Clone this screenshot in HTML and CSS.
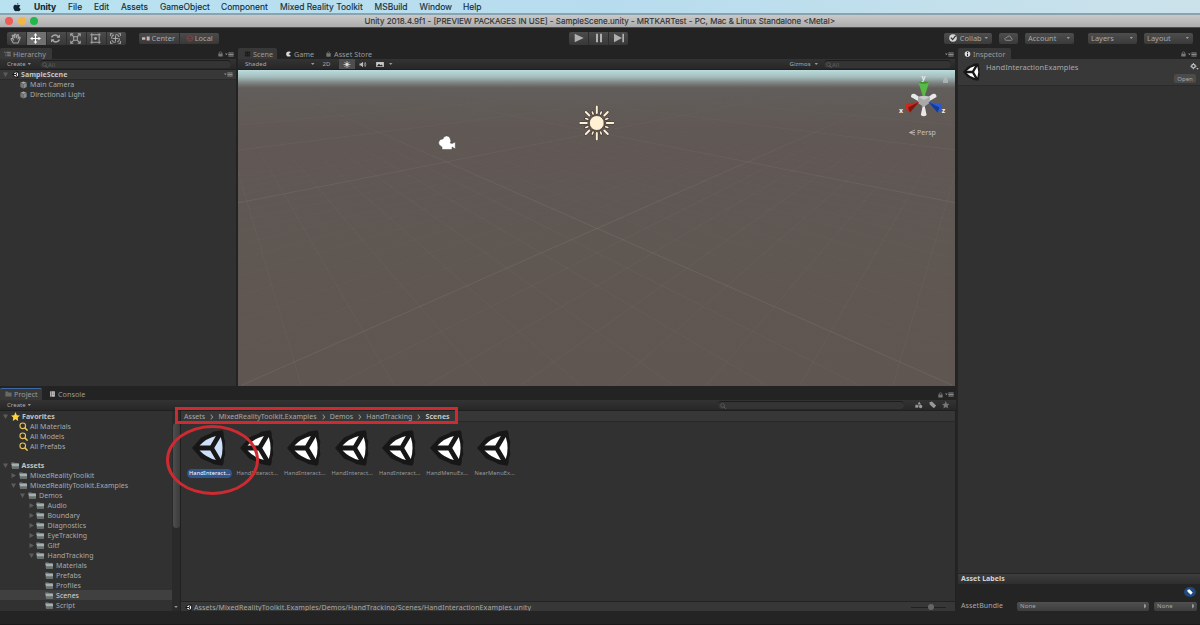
FILE: index.html
```
<!DOCTYPE html>
<html>
<head>
  <meta charset="UTF-8">
  <title>Unity 2018.4.9f1 - SampleScene.unity - MRTKARTest</title>
  <link rel="stylesheet" href="styles.css">
</head>
<body>

<!-- shared icons -->
<svg class="sprite">
  <symbol id="unity" viewBox="0 0 104 108">
    <path fill="#171717" d="M0 54 L28 22 60 8 64 4 92 0 96 5 98 24 102 34 100 54 102 74 98 84 96 103 92 108 64 103 60 100 28 86Z"/>
    <path fill="currentColor" d="M23 46 L56 46 73 17 Q44 24 23 46Z M68 54 L88 20 Q99 54 88 88Z M23 62 L56 62 73 91 Q44 84 23 62Z"/>
  </symbol>
  <symbol id="folder" viewBox="0 0 26 21">
    <path fill="#7b8688" d="M1 2 Q1 1 2 1 H10 L12 3 H23 Q24 3 24 4 V9 H1Z"/>
    <path fill="#a3aeb0" d="M2 6 H25 L24 20 H3Z"/>
    <path fill="#66716f" d="M2.500 13 H24.500 L24 20 H3Z"/>
  </symbol>
  <symbol id="lock" viewBox="0 0 16 18">
    <path fill="none" stroke="#777" stroke-width="2.500" d="M4 9 V5 Q4 2 8 2 Q12 2 12 5 V9"/>
    <rect x="1" y="8" width="14" height="9" fill="#777"/>
  </symbol>
  <symbol id="menu" viewBox="0 0 27 14">
    <path fill="#8b8b8b" d="M0 4 H8 L4 9Z M10 1 H26 V4 H10Z M10 5.500 H26 V8.500 H10Z M10 10 H26 V13 H10Z"/>
  </symbol>
  <symbol id="search" viewBox="0 0 24 24">
    <circle cx="10" cy="10" r="7.500" fill="none" stroke="currentColor" stroke-width="3"/>
    <path stroke="currentColor" stroke-width="4" d="M15 15 L23 23"/>
  </symbol>
  <symbol id="cube" viewBox="0 0 22 24">
    <path fill="#a5a5a5" d="M11 1 L21 5 11 9 1 5Z"/>
    <path fill="#777" d="M1 5.500 L11 9.500 V23 L1 18Z"/>
    <path fill="#8b8b8b" d="M21 5.500 L11 9.500 V23 L21 18Z"/>
  </symbol>
  <symbol id="down" viewBox="0 0 10 10"><path fill="#5c5c5c" d="M0 1 H10 L5 10Z"/></symbol>
  <symbol id="right" viewBox="0 0 10 10"><path fill="#5c5c5c" d="M1 0 V10 L10 5Z"/></symbol>
</svg>

<div class="menubar">
  <svg class="apple" viewBox="0 0 24 28"><path fill="#123" d="M16 1 Q16 5 12 7 Q11 3 16 1Z M12 9 Q14 7 18 7 Q21 8 22 10 Q18 12 19 16 Q20 19 23 20 Q20 28 16 27 Q12 25 9 27 Q5 28 2 20 Q-1 9 6 7.500 Q9 7 12 9Z"/></svg>
  <b class="m-unity">Unity</b>
  <span class="m-file">File</span>
  <span class="m-edit">Edit</span>
  <span class="m-assets">Assets</span>
  <span class="m-object">GameObject</span>
  <span class="m-component">Component</span>
  <span class="m-mrtk">Mixed Reality Toolkit</span>
  <span class="m-build">MSBuild</span>
  <span class="m-window">Window</span>
  <span>Help</span>
</div>

<div class="titlebar">
  <i class="light red"></i><i class="light yellow"></i><i class="light green"></i>
  <span class="title">Unity 2018.4.9f1 - [PREVIEW PACKAGES IN USE] - SampleScene.unity - MRTKARTest - PC, Mac &amp; Linux Standalone &lt;Metal&gt;</span>
</div>

<div class="toolbar">
  <div class="group tools">
    <button><svg viewBox="0 0 30 30"><path d="M9 27 L3 17 Q3 14 6 15 L9 18 L6 7 Q8 4 10 7 L12 14 L12 4 Q14 1 16 4 L17 14 L20 5 Q22 3 23 6 L22 15 L26 11 Q29 11 27 15 L22 27Z"/></svg></button>
    <button class="on"><svg viewBox="0 0 30 30"><path d="M15 3 V27 M3 15 H27" stroke="#fff" stroke-width="3"/><path fill="#fff" stroke="none" d="M15 0 L20 7 H10Z M15 30 L20 23 H10Z M0 15 L7 10 V20Z M30 15 L23 10 V20Z"/></svg></button>
    <button><svg viewBox="0 0 30 30"><path stroke-width="4" d="M4 12 Q9 4 17 6 L23 10 M26 18 Q21 26 13 24 L7 20"/><path class="solid" d="M27 4 V13 H18Z M3 26 V17 H12Z"/></svg></button>
    <button><svg viewBox="0 0 30 30"><path d="M4 4 L11 11 M26 4 L19 11 M4 26 L11 19 M26 26 L19 19 M10 10 H20 V20 H10Z M2 9 V2 H9 M21 2 H28 V9 M28 21 V28 H21 M9 28 H2 V21"/></svg></button>
    <button><svg viewBox="0 0 30 30"><path d="M5 1 V29 M25 1 V29 M1 5 H29 M1 25 H29"/><circle class="solid" cx="15" cy="15" r="4"/></svg></button>
    <button><svg viewBox="0 0 30 30"><path d="M15 7 V23 M7 15 H23 M1 8 V2 H7 M23 2 H29 V8 M29 22 V28 H23 M7 28 H1 V22"/><circle cx="15" cy="15" r="11" stroke-dasharray="12 5"/></svg></button>
  </div>
  <div class="group pivot">
    <button><svg class="ico" viewBox="0 0 24 16"><path fill="#bbb" d="M0 4 H10 V12 H0Z M14 2 H23 V14 H14Z"/><circle cx="12" cy="8" r="3" fill="#a44"/></svg>Center</button>
    <button><svg class="ico" viewBox="0 0 24 22"><path fill="none" stroke="#844" stroke-width="2.500" d="M3 7 L12 2 21 7 V15 L12 20 3 15Z M3 10 Q12 16 21 10"/></svg>Local</button>
  </div>
  <div class="group play">
    <button><svg viewBox="0 0 30 30"><path class="solid" d="M2 2 L29 15 2 28Z"/></svg></button>
    <button><svg viewBox="0 0 30 30"><path class="solid" d="M6 2 H12 V28 H6Z M18 2 H24 V28 H18Z"/></svg></button>
    <button><svg viewBox="0 0 30 30"><path class="solid" d="M0 2 L24 15 0 28Z M25 2 H30 V28 H25Z"/></svg></button>
  </div>
  <div class="right-tools">
    <button class="drop collab"><svg class="check" viewBox="0 0 20 20"><circle cx="10" cy="10" r="9.500" fill="#d6d6d6"/><path fill="none" stroke="#333" stroke-width="3" d="M5 9 L9 14 17 4"/></svg>Collab<i class="caret"></i></button>
    <button class="drop cloud"><svg viewBox="0 0 26 18"><path fill="none" stroke="#aaa" stroke-width="2" d="M6 16 Q1 15 2 11 Q4 7 8 8 Q11 1 17 3 Q20 5 20 9 Q25 10 24 14 Q23 16 20 16Z"/></svg></button>
    <button class="drop account">Account<i class="caret"></i></button>
    <button class="drop layers">Layers<i class="caret"></i></button>
    <button class="drop layout">Layout<i class="caret"></i></button>
  </div>
</div>

<div class="workspace">
  <div class="left">
    <div class="upper">

      <div class="panel hierarchy">
        <div class="tabs">
          <div class="tab active"><svg viewBox="0 0 24 18"><path stroke="#aaa" stroke-width="2.500" d="M1 3 H5 M8 3 H23 M5 9 H8 M11 9 H23 M5 15 H8 M11 15 H23"/></svg>Hierarchy</div>
          <div class="corner"><svg class="lk"><use href="#lock"/></svg><svg class="mn"><use href="#menu"/></svg></div>
        </div>
        <div class="strip">
          <span class="create">Create</span><i class="caret"></i>
          <div class="search"><svg><use href="#search"/></svg>All</div>
        </div>
        <div class="row scene-row">
          <svg class="arrow"><use href="#down"/></svg>
          <svg class="u"><use href="#unity"/></svg><b>SampleScene</b>
          <svg class="mn"><use href="#menu"/></svg>
        </div>
        <div class="row obj"><svg><use href="#cube"/></svg>Main Camera</div>
        <div class="row obj"><svg><use href="#cube"/></svg>Directional Light</div>
      </div>

      <div class="panel scene">
        <div class="tabs">
          <div class="tab active"><svg viewBox="0 0 18 18"><path stroke="#161616" stroke-width="2" d="M4 1 V17 M9 1 V17 M14 1 V17 M1 4 H17 M1 9 H17 M1 14 H17"/></svg>Scene</div>
          <div class="tab game"><svg viewBox="0 0 18 18"><path fill="#ddd" d="M15 2 Q2 -1 2 9 Q2 19 15 16 V13 L9 9 15 5Z"/></svg>Game</div>
          <div class="tab store"><svg viewBox="0 0 18 18"><path fill="#777" d="M2 7 H16 L15 17 H3Z"/><path fill="none" stroke="#777" stroke-width="2" d="M6 7 V4 Q9 0 12 4 V7"/></svg>Asset Store</div>
          <div class="corner"><svg class="mn"><use href="#menu"/></svg></div>
        </div>
        <div class="strip">
          <span class="shaded">Shaded</span><i class="caret"></i>
          <span class="twod">2D</span>
          <span class="sb sun-on"><svg viewBox="0 0 20 20"><circle cx="10" cy="10" r="4" fill="#ddd"/><path stroke="#ddd" stroke-width="2" d="M10 0 V20 M0 10 H20 M3 3 L17 17 M17 3 L3 17"/></svg></span>
          <span class="sb"><svg viewBox="0 0 20 20"><path fill="#bbb" d="M0 7 H4 L10 2 V18 L4 13 H0Z"/><path fill="none" stroke="#bbb" stroke-width="2" d="M13 6 Q15 10 13 14 M16 3 Q20 10 16 17"/></svg></span>
          <span class="sb"><svg viewBox="0 0 22 20"><path fill="#ccc" d="M0 3 H22 V17 H0Z"/><path fill="#222" d="M2 15 L8 8 12 12 15 10 20 15Z"/></svg></span>
          <i class="caret fx"></i>
          <span class="gizmos">Gizmos</span><i class="caret"></i>
          <div class="search"><svg><use href="#search"/></svg>All</div>
        </div>
        <div class="viewport">
          <svg class="view" viewBox="238 70 717 316">
            <defs>
              <linearGradient id="fade" x1="0" y1="84" x2="0" y2="386" gradientUnits="userSpaceOnUse">
                <stop offset="0" stop-color="#000"/>
                <stop offset=".2" stop-color="#888"/>
                <stop offset=".4" stop-color="#fff"/>
              </linearGradient>
              <mask id="far" maskUnits="userSpaceOnUse" x="238" y="70" width="718" height="316">
                <rect x="238" y="70" width="718" height="316" fill="url(#fade)"/>
              </mask>
              <!-- floor lines running to the right vanishing point -->
              <g id="floor">
                <path opacity=".22" d="M990 55 L242 385 M990 55 L-688 385 M990 55 L-1618 385 M990 55 L-2548 385 M990 55 L-3478 385"/>
                <path opacity=".06" d="M990 55 L149 385 M990 55 L56 385 M990 55 L-37 385 M990 55 L-130 385 M990 55 L-223 385 M990 55 L-316 385 M990 55 L-409 385 M990 55 L-502 385 M990 55 L-595 385 M990 55 L-781 385 M990 55 L-874 385 M990 55 L-967 385 M990 55 L-1060 385"/>
                <path opacity=".1" d="M990 55 L335 385 M990 55 L428 385 M990 55 L521 385 M990 55 L614 385 M990 55 L707 385 M990 55 L800 385 M990 55 L893 385"/>
              </g>
            </defs>
            <g mask="url(#far)" stroke="#a09c98" stroke-width=".8">
              <use href="#floor"/>
              <use href="#floor" transform="translate(1194 0) scale(-1 1)"/>
            </g>
            <!-- camera -->
            <path fill="#fff" stroke="#4a4442" stroke-width=".5" d="M440.500 146 A3.800 3.800 0 0 1 443 139 A3.700 3.700 0 0 1 450.300 139 A3.700 3.700 0 0 1 450.300 143 L452 143.500 L455.300 142 V149 L452 147 V149.500 H442 V147Z"/>
            <!-- directional light -->
            <g transform="translate(596.800 123)" stroke-linecap="round">
              <g stroke="#3f3733" stroke-width="3">
                <path d="M0 -16.500 V-10 M0 16.500 V10 M-16.500 0 H-10 M16.500 0 H10 M-11 -11 L-7.500 -7.500 M11 -11 L7.500 -7.500 M-11 11 L-7.500 7.500 M11 11 L7.500 7.500"/>
                <path d="M-4.500 -11 L-3.700 -9 M4.500 -11 L3.700 -9 M-4.500 11 L-3.700 9 M4.500 11 L3.700 9 M-11 -4.500 L-9 -3.700 M11 -4.500 L9 -3.700 M-11 4.500 L-9 3.700 M11 4.500 L9 3.700"/>
              </g>
              <g stroke="#fff0d4" stroke-width="2">
                <path d="M0 -16.500 V-10 M0 16.500 V10 M-16.500 0 H-10 M16.500 0 H10 M-11 -11 L-7.500 -7.500 M11 -11 L7.500 -7.500 M-11 11 L-7.500 7.500 M11 11 L7.500 7.500"/>
                <path stroke-width="1.600" d="M-4.500 -11 L-3.700 -9 M4.500 -11 L3.700 -9 M-4.500 11 L-3.700 9 M4.500 11 L3.700 9 M-11 -4.500 L-9 -3.700 M11 -4.500 L9 -3.700 M-11 4.500 L-9 3.700 M11 4.500 L9 3.700"/>
              </g>
              <circle r="7.500" fill="#fff0d4" stroke="#3f3733" stroke-width=".8"/>
            </g>
            <!-- orientation gizmo -->
            <path fill="#e8e8e8" d="M911 97 Q911 93 915 94 L920.500 98 918 101Z M936.500 97 Q936.500 93 932.500 94 L927 98 929.500 101Z M920.800 115 Q923.700 117.500 926.600 115 L924.700 106 H922.700Z"/>
            <path fill="#a9a9a9" d="M918 97 L924 95.500 930 97 929.500 103 923.700 107 918 103Z"/>
            <path fill="#c9c9c9" d="M918 97 L924 95.500 930 97 924 100Z"/>
            <path fill="#58b947" d="M918.500 82.500 Q923.700 80.500 929 82.500 L924.700 96 H922.800Z"/>
            <path fill="#3d9230" d="M918.500 82.500 Q923.700 85 929 82.500 Q923.700 80.500 918.500 82.500Z"/>
            <path fill="#c92a1c" d="M905.500 104 L919 102 910 112.500 Q905 111 905.500 104Z"/>
            <path fill="#7e1610" d="M908 107.500 L919 102 910 112.500Z"/>
            <path fill="#2a5bd0" d="M942 104 L928.500 102 937.500 112.500 Q942.500 111 942 104Z"/>
            <path fill="#163a94" d="M939.500 107.500 L928.500 102 937.500 112.500Z"/>
            <text x="921.500" y="80">y</text><text x="899" y="113">x</text><text x="941.700" y="113">z</text>
            <path fill="none" stroke="#c5c0be" stroke-width=".8" d="M915 130 L909.500 132.500 915 135 M915 132.500 H909.500"/>
            <text class="persp" x="917" y="135">Persp</text>
            <path fill="#b8c0c0" opacity=".7" d="M943 79.500 H948 V83 H943Z M944 79.500 V77.500 H947 V79.500Z"/>
          </svg>
        </div>
      </div>
    </div>

    <div class="panel project">
      <div class="tabs">
        <div class="tab active focus"><svg viewBox="0 0 20 16"><path fill="#686868" d="M1 1 H8 L10 4 H19 V15 H1Z"/></svg>Project</div>
        <div class="tab console"><svg viewBox="0 0 16 18"><path fill="#ccc" d="M1 1 H15 V17 H1Z"/><path stroke="#555" stroke-width="2" d="M5 1 V17 M8 6 H13 M8 11 H13"/></svg>Console</div>
        <div class="corner"><svg class="lk"><use href="#lock"/></svg><svg class="mn"><use href="#menu"/></svg></div>
      </div>
      <div class="strip">
        <span class="create">Create</span><i class="caret"></i>
        <div class="search"><svg><use href="#search"/></svg></div>
        <div class="filters">
          <svg viewBox="0 0 20 20"><path fill="#999" d="M7 9 L11 1 16 9Z M0 17 L2 9 10 12 8 18Z"/><circle cx="15" cy="14.500" r="4.500" fill="#999"/></svg>
          <svg viewBox="0 0 20 20"><path fill="#999" d="M1 3 L8 1 19 12 13 19 2 9Z"/></svg>
          <svg viewBox="0 0 20 20"><path fill="#777" d="M10 0 L13 7 20 8 15 12 16 20 10 16 4 20 5 12 0 8 7 7Z"/></svg>
        </div>
      </div>
      <div class="browser">
        <div class="tree">
          <div class="row"><svg class="arrow"><use href="#down"/></svg><svg class="star" viewBox="0 0 20 20"><path fill="#ffd23e" d="M10 0 L13 7 20 8 15 12 16 20 10 16 4 20 5 12 0 8 7 7Z"/></svg><b>Favorites</b></div>
          <div class="row fav"><svg><use href="#search"/></svg>All Materials</div>
          <div class="row fav"><svg><use href="#search"/></svg>All Models</div>
          <div class="row fav"><svg><use href="#search"/></svg>All Prefabs</div>
          <div class="row root"><svg class="arrow"><use href="#down"/></svg><svg class="dir"><use href="#folder"/></svg><b>Assets</b></div>
          <div class="row d1"><svg class="arrow"><use href="#right"/></svg><svg class="dir"><use href="#folder"/></svg>MixedRealityToolkit</div>
          <div class="row d1"><svg class="arrow"><use href="#down"/></svg><svg class="dir"><use href="#folder"/></svg>MixedRealityToolkit.Examples</div>
          <div class="row d2"><svg class="arrow"><use href="#down"/></svg><svg class="dir"><use href="#folder"/></svg>Demos</div>
          <div class="row d3"><svg class="arrow"><use href="#right"/></svg><svg class="dir"><use href="#folder"/></svg>Audio</div>
          <div class="row d3"><svg class="arrow"><use href="#right"/></svg><svg class="dir"><use href="#folder"/></svg>Boundary</div>
          <div class="row d3"><svg class="arrow"><use href="#right"/></svg><svg class="dir"><use href="#folder"/></svg>Diagnostics</div>
          <div class="row d3"><svg class="arrow"><use href="#right"/></svg><svg class="dir"><use href="#folder"/></svg>EyeTracking</div>
          <div class="row d3"><svg class="arrow"><use href="#right"/></svg><svg class="dir"><use href="#folder"/></svg>Gltf</div>
          <div class="row d3"><svg class="arrow"><use href="#down"/></svg><svg class="dir"><use href="#folder"/></svg>HandTracking</div>
          <div class="row d4"><svg class="dir"><use href="#folder"/></svg>Materials</div>
          <div class="row d4"><svg class="dir"><use href="#folder"/></svg>Prefabs</div>
          <div class="row d4"><svg class="dir"><use href="#folder"/></svg>Profiles</div>
          <div class="row d4 selected"><svg class="dir"><use href="#folder"/></svg>Scenes</div>
          <div class="row d4"><svg class="dir"><use href="#folder"/></svg>Script</div>
        </div>
        <div class="scrollbar"><div class="thumb"></div><i class="caret"></i></div>
        <div class="content">
          <div class="crumbs">
            <span>Assets</span><i></i><span>MixedRealityToolkit.Examples</span><i></i><span>Demos</span><i></i><span>HandTracking</span><i></i><b>Scenes</b>
          </div>
          <div class="files">
            <div class="file picked"><svg><use href="#unity"/></svg><span>HandInteract...</span></div>
            <div class="file"><svg><use href="#unity"/></svg><span>HandInteract...</span></div>
            <div class="file"><svg><use href="#unity"/></svg><span>HandInteract...</span></div>
            <div class="file"><svg><use href="#unity"/></svg><span>HandInteract...</span></div>
            <div class="file"><svg><use href="#unity"/></svg><span>HandInteract...</span></div>
            <div class="file"><svg><use href="#unity"/></svg><span>HandMenuEx...</span></div>
            <div class="file"><svg><use href="#unity"/></svg><span>NearMenuEx...</span></div>
          </div>
          <div class="pathbar">
            <svg><use href="#unity"/></svg><span>Assets/MixedRealityToolkit.Examples/Demos/HandTracking/Scenes/HandInteractionExamples.unity</span>
            <div class="slider"><i></i></div>
          </div>
        </div>
      </div>
    </div>
  </div>

  <div class="panel inspector">
    <div class="tabs">
      <div class="tab active"><svg viewBox="0 0 18 18"><circle cx="9" cy="9" r="8.500" fill="#ddd"/><path stroke="#222" stroke-width="3" d="M9 3 V6 M9 8 V15"/></svg>Inspector</div>
      <div class="corner"><svg class="lk"><use href="#lock"/></svg><svg class="mn"><use href="#menu"/></svg></div>
    </div>
    <div class="asset-head">
      <svg class="big"><use href="#unity"/></svg>
      <span class="name">HandInteractionExamples</span>
      <div class="side">
        <svg viewBox="0 0 24 20"><circle cx="9" cy="9" r="5" fill="none" stroke="#bbb" stroke-width="4"/><path stroke="#bbb" stroke-width="3" stroke-dasharray="4 10" d="M9 0 V18 M0 9 H18"/><path fill="#bbb" d="M17 14 H24 L20.500 19Z"/></svg>
        <button>Open</button>
      </div>
    </div>
    <div class="empty"></div>
    <div class="labels-head">Asset Labels</div>
    <div class="labels">
      <div class="tag"><svg viewBox="0 0 20 20"><path fill="#fff" d="M1 3 L8 1 19 12 13 19 2 9Z"/></svg></div>
      <div class="bundle">
        <span>AssetBundle</span>
        <div class="select wide">None<i></i></div>
        <div class="select">None<i></i></div>
      </div>
    </div>
  </div>
</div>

<div class="statusbar"></div>

<!-- red markers over the breadcrumb and the first scene -->
<div class="mark box"></div>
<div class="mark ring"></div>

</body>
</html>
```
FILE: styles.css
```
* {
	box-sizing: border-box;
}

body {
	margin: 0;
	width: 1200px;
	height: 625px;
	overflow: hidden;
	display: flex;
	flex-direction: column;
	background: #242424;
	color: #a9a9a9;
	font-family: "Noto Sans", "Open Sans", sans-serif;
	font-size: 7px;
	line-height: 10px;
	letter-spacing: 0.04px;
	white-space: nowrap;
}

svg {
	display: block;
	flex: none;
}

b {
	color: #c4c4c4;
}

button {
	font: inherit;
	letter-spacing: inherit;
	color: inherit;
	border: none;
	padding: 0;
	margin: 0;
}

.sprite {
	position: absolute;
	width: 0;
	height: 0;
}

/* Mac menu bar */
.menubar {
	height: 13px;
	display: flex;
	align-items: center;
	padding-left: 13px;
	background: linear-gradient(90deg, #b9e2f0, #b7dcee 50%, #cbe2ea);
	color: #14313d;
	font-family: Inter, sans-serif;
	font-size: 8.5px;
	letter-spacing: 0;
	-webkit-text-stroke: 0.15px #14313d;
}

.menubar b {
	color: #0f2833;
}

.apple {
	width: 8px;
	height: 10px;
	margin-right: 13px;
}

.m-unity { width: 34px; }
.m-file { width: 26px; }
.m-edit { width: 27px; }
.m-assets { width: 39px; }
.m-object { width: 61px; }
.m-component { width: 59px; }
.m-mrtk { width: 94.5px; }
.m-build { width: 45px; }
.m-window { width: 43.5px; }

/* Window title */
.titlebar {
	height: 15px;
	display: flex;
	align-items: center;
	padding-left: 5px;
	border-top: 2px solid #8ba3ae;
	border-bottom: 1px solid #4e4e4e;
	background: linear-gradient(#c9c9c9, #adadad);
	color: #333;
	font-family: Inter, sans-serif;
	font-size: 8px;
	letter-spacing: 0;
	-webkit-text-stroke: 0.15px #333;
}

.light {
	width: 8px;
	height: 8px;
	margin-right: 4.5px;
	border-radius: 50%;
}

.light.red { background: #ee5c56; }
.light.yellow { background: #f2b645; }
.light.green { background: #1fb84b; }

.title {
	margin-left: 322px;
}

/* Main toolbar */
.toolbar {
	height: 20px;
	display: flex;
	align-items: center;
	padding-left: 7px;
	background: #232323;
}

.group {
	display: flex;
	height: 13px;
}

.group button {
	display: flex;
	align-items: center;
	justify-content: center;
	flex: 1;
	background: linear-gradient(#4b4b4b, #383838);
	border-right: 1px solid #2d2d2d;
}

.group button:first-child {
	border-radius: 2px 0 0 2px;
}

.group button:last-child {
	border-radius: 0 2px 2px 0;
	border-right: none;
}

.group button.on {
	background: #707070;
}

.group button svg {
	width: 11px;
	height: 11px;
	margin-right: 2px;
	fill: none;
	stroke: #a8a8a8;
	stroke-width: 2.8;
}

.group .solid {
	fill: #b0b0b0;
	stroke: none;
}

.tools {
	width: 119px;
}

.pivot {
	width: 80px;
	height: 11px;
	margin-left: 13px;
	font-size: 7.4px;
}

.group button svg.ico {
	width: 8px;
	height: 7px;
	margin-right: 1px;
	stroke: none;
}

.play {
	width: 59px;
	margin-left: 350px;
}

.group.play button svg {
	width: 10px;
	height: 10px;
	margin-right: 0;
}

.right-tools {
	display: flex;
	margin-left: 316px;
}

.drop {
	display: flex;
	align-items: center;
	justify-content: space-between;
	width: 49px;
	height: 11px;
	padding: 0 4px 0 3px;
	background: linear-gradient(#4d4d4d, #3a3a3a);
	border-radius: 2px;
	font-size: 7.4px;
}

.collab { width: 48px; padding-left: 5px; }
.cloud { width: 19px; margin-left: 7px; justify-content: center; padding: 0; }
.cloud svg { width: 9px; height: 6px; }
.check { width: 8px; height: 8px; }
.account { margin-left: 7px; }
.layers { margin-left: 14px; }
.layout { margin-left: 7px; }

.caret {
	flex: none;
	width: 3.5px;
	height: 2px;
	background: #999;
	clip-path: polygon(0 0, 100% 0, 50% 100%);
}

/* Docked panels */
.workspace {
	display: flex;
	height: 563px;
}

.left {
	width: 956px;
	background: #232323;
}

.upper {
	display: flex;
	height: 338px;
}

.panel {
	background: #313131;
	display: flex;
	flex-direction: column;
}

.tabs {
	display: flex;
	height: 11px;
	background: #232323;
	font-size: 7.2px;
	flex: none;
}

.tab {
	display: flex;
	align-items: center;
	height: 11px;
	color: #9b9b9b;
}

.tab.active {
	background: #383838;
	border-radius: 2px 2px 0 0;
}

.tab svg {
	width: 7px;
	height: 6px;
	margin-right: 2px;
}

.corner {
	display: flex;
	align-items: center;
	margin-left: auto;
	padding-top: 1px;
}

.lk {
	width: 5px;
	height: 6px;
	margin-right: 2px;
}

.mn {
	width: 9px;
	height: 5px;
}

.strip {
	display: flex;
	align-items: center;
	height: 11px;
	flex: none;
	background: linear-gradient(#333, #272727);
	border-bottom: 1px solid #1f1f1f;
	font-size: 6px;
}

.search {
	display: flex;
	align-items: center;
	height: 8px;
	padding-left: 2px;
	border-radius: 4px;
	background: #343434;
	border-top: 1px solid #1d1d1d;
	color: #606060;
}

.search svg {
	width: 6px;
	height: 6px;
}

.row {
	display: flex;
	align-items: center;
	height: 10px;
	padding-top: 1px;
	flex: none;
}

/* Hierarchy */
.hierarchy {
	width: 236px;
}

.hierarchy .tab {
	width: 52px;
	padding-left: 4px;
}

.hierarchy .corner {
	padding-right: 2px;
}

.create {
	margin-left: 7px;
	width: 20.5px;
}

.hierarchy .search {
	width: 191px;
	margin-left: 9px;
}

.scene-row {
	height: 10px;
	padding: 0 0 0 3px;
	background: #383838;
	border-bottom: 1px solid #2a2a2a;
}

.arrow {
	width: 5px;
	height: 5px;
}

.scene-row .u {
	width: 7px;
	height: 7px;
	margin: 0 2px 0 4px;
	color: #fff;
}

.scene-row .mn {
	margin: 0 3px 0 auto;
}

.obj {
	padding: 0 0 0 20px;
}

.obj svg {
	width: 7px;
	height: 8px;
	margin-right: 3px;
}

/* Scene view */
.scene {
	width: 717px;
	margin-left: 2px;
}

.scene .tab.active {
	width: 39px;
	padding-left: 6px;
}

.game {
	margin-left: 8px;
	width: 40px;
}

.scene .corner {
	padding-right: 1px;
}

.shaded {
	margin-left: 7px;
	width: 66px;
}

.twod {
	margin-left: 8px;
	width: 16px;
}

.sb {
	display: flex;
	align-items: center;
	justify-content: center;
	width: 16.5px;
	height: 10px;
}

.sb svg {
	width: 8px;
	height: 7px;
}

.sun-on {
	background: #4e4e4e;
}

.fx {
	margin-left: 1px;
}

.gizmos {
	margin-left: 397px;
	width: 25px;
}

.scene .search {
	width: 127px;
	margin-left: 6px;
}

.viewport {
	flex: 1;
	background: linear-gradient(#bcdcdd, #a5bdbd 7px, #7c8280 13px, #625e5b 18px, #605854 60px, #5f5651);
}

.view {
	width: 717px;
	height: 316px;
}

.view text {
	fill: #eee;
	font-size: 7px;
	font-weight: bold;
}

.view .persp {
	fill: #c5c0be;
	font-weight: normal;
}

/* Project browser */
.project {
	height: 225px;
	padding-top: 2px;
	background: #232323;
}

.project .tabs {
	height: 12px;
}

.project .tab {
	height: 12px;
	padding-bottom: 0.5px;
}

.project .tab.active {
	width: 42px;
	padding-left: 5px;
}

.tab.focus {
	border-top: 1px solid #3b6ba5;
}

.project .console {
	margin-left: 7px;
	padding-bottom: 1px;
}

.project .corner {
	padding-right: 2px;
}

.project .search {
	width: 186px;
	margin-left: 687px;
}

.filters {
	display: flex;
	gap: 6px;
	margin-left: 11px;
}

.filters svg {
	width: 7.5px;
	height: 7.5px;
}

.browser {
	display: flex;
	height: 200px;
}

.tree {
	width: 172px;
	background: #313131;
	overflow: hidden;
}

.tree .row {
	padding-left: 3px;
}

.tree .star {
	width: 9px;
	height: 9px;
	margin: 0 2px 0 3px;
}

.tree .fav {
	padding-left: 19px;
}

.fav svg {
	width: 9px;
	height: 9px;
	margin-right: 2px;
	color: #e9c355;
}

.tree .root {
	margin-top: 9px;
}

.dir {
	width: 8.5px;
	height: 7px;
	margin: 0 3px 0 2.5px;
}

.root .dir {
	margin-right: 2.5px;
}

.tree .d1 { padding-left: 11px; }
.tree .d2 { padding-left: 20px; }
.tree .d3 { padding-left: 28.5px; }
.tree .d4 { padding-left: 42px; }

.selected {
	background: #404040;
	color: #d5d5d5;
}

.scrollbar {
	width: 9px;
	background: #2a2a2a;
	border-right: 1px solid #202020;
	display: flex;
	flex-direction: column;
	align-items: center;
	justify-content: space-between;
	padding: 12px 0 3px;
}

.thumb {
	width: 7px;
	height: 105px;
	border-radius: 4px;
	background: linear-gradient(90deg, #4e4e4e, #3b3b3b);
}

.content {
	flex: 1;
	display: flex;
	flex-direction: column;
	background: #313131;
	border-right: 1px solid #222;
}

.crumbs {
	display: flex;
	align-items: center;
	height: 11px;
	padding: 1px 0 0 3px;
	background: #373737;
	border-bottom: 1px solid #282828;
}

.crumbs i {
	width: 4px;
	height: 4px;
	margin: 0 5.2px 0 4px;
	border: solid #909090;
	border-width: 1px 1px 0 0;
	transform: scaleX(0.8) rotate(45deg);
}

.files {
	flex: 1;
	display: flex;
	padding: 8px 0 0 5px;
}

.file {
	display: flex;
	flex-direction: column;
	align-items: center;
	width: 47.5px;
	color: #fff;
}

.file svg {
	width: 34px;
	height: 36px;
	margin-right: 1px;
}

.file span {
	height: 9px;
	line-height: 9px;
	margin-top: 3px;
	padding: 0 2px;
	border-radius: 5px;
	color: #9a9a9a;
	font-size: 5.7px;
	letter-spacing: 0.1px;
}

.picked {
	color: #cfe0fb;
}

.file.picked span {
	background: #2f568f;
	color: #fff;
}

.pathbar {
	display: flex;
	align-items: center;
	height: 10px;
	padding: 1px 0 0 4px;
	background: #373737;
	border-top: 1px solid #222;
	letter-spacing: 0.12px;
}

.pathbar span {
	padding-top: 1px;
}

.pathbar svg {
	width: 7px;
	height: 7px;
	margin-right: 2px;
	color: #fff;
}

.slider {
	width: 35px;
	height: 1px;
	margin: 0 9px 0 auto;
	background: #222;
}

.slider i {
	display: block;
	width: 6px;
	height: 6px;
	margin: -3px 0 0 17px;
	border-radius: 50%;
	background: #666;
}

/* Inspector */
.inspector {
	width: 242px;
	margin-left: 2px;
}

.inspector .tab {
	width: 53px;
	padding-left: 6px;
}

.inspector .corner {
	padding-right: 3px;
}

.asset-head {
	display: flex;
	height: 27px;
	padding: 4px 4px 0 5px;
	background: #383838;
	border-bottom: 1px solid #2a2a2a;
}

.big {
	width: 17px;
	height: 18px;
	color: #fff;
}

.name {
	margin: -1px 0 0 6px;
	font-size: 7.5px;
}

.side {
	display: flex;
	flex-direction: column;
	align-items: flex-end;
	margin-left: auto;
}

.side svg {
	width: 9px;
	height: 7px;
	margin-right: -3px;
}

.side button {
	width: 22px;
	height: 9px;
	margin-top: 4px;
	border-radius: 2px;
	background: #4b4b4b;
	font-size: 6px;
	line-height: 8px;
}

.empty {
	flex: 1;
}

.labels-head {
	height: 11px;
	padding-left: 3px;
	line-height: 9px;
	background: linear-gradient(#3d3d3d, #2e2e2e);
	border-top: 1px solid #242424;
	color: #d5d5d5;
	font-weight: bold;
}

.labels {
	height: 27px;
	background: #242424;
}

.tag {
	width: 12px;
	height: 10px;
	margin: 3px 4px 0 auto;
	padding: 2px 3px;
	border-radius: 50%;
	background: #1e4a80;
}

.tag svg {
	width: 6px;
	height: 6px;
}

.bundle {
	display: flex;
	align-items: center;
	margin-top: 4px;
	padding-left: 3px;
	letter-spacing: 0.1px;
}

.bundle span {
	width: 56px;
}

.select {
	display: flex;
	align-items: center;
	justify-content: space-between;
	width: 43px;
	height: 9px;
	padding: 0 3px;
	border-radius: 2px;
	background: linear-gradient(#505050, #3d3d3d);
	font-size: 6px;
}

.select.wide {
	width: 132px;
	margin-right: 5px;
}

.select i {
	width: 2.5px;
	height: 5px;
	background: #999;
	clip-path: polygon(0 40%, 50% 0, 100% 40%, 100% 60%, 50% 100%, 0 60%);
}

.statusbar {
	height: 14px;
	background: #242424;
	border-bottom: 1px solid #1a1a1a;
}

/* Red markers */
.mark {
	position: absolute;
	border: 3px solid #cb2b31;
}

.mark.box {
	left: 175px;
	top: 407px;
	width: 283px;
	height: 17px;
}

.mark.ring {
	left: 166px;
	top: 425px;
	width: 93px;
	height: 70px;
	border-radius: 50%;
}
```
